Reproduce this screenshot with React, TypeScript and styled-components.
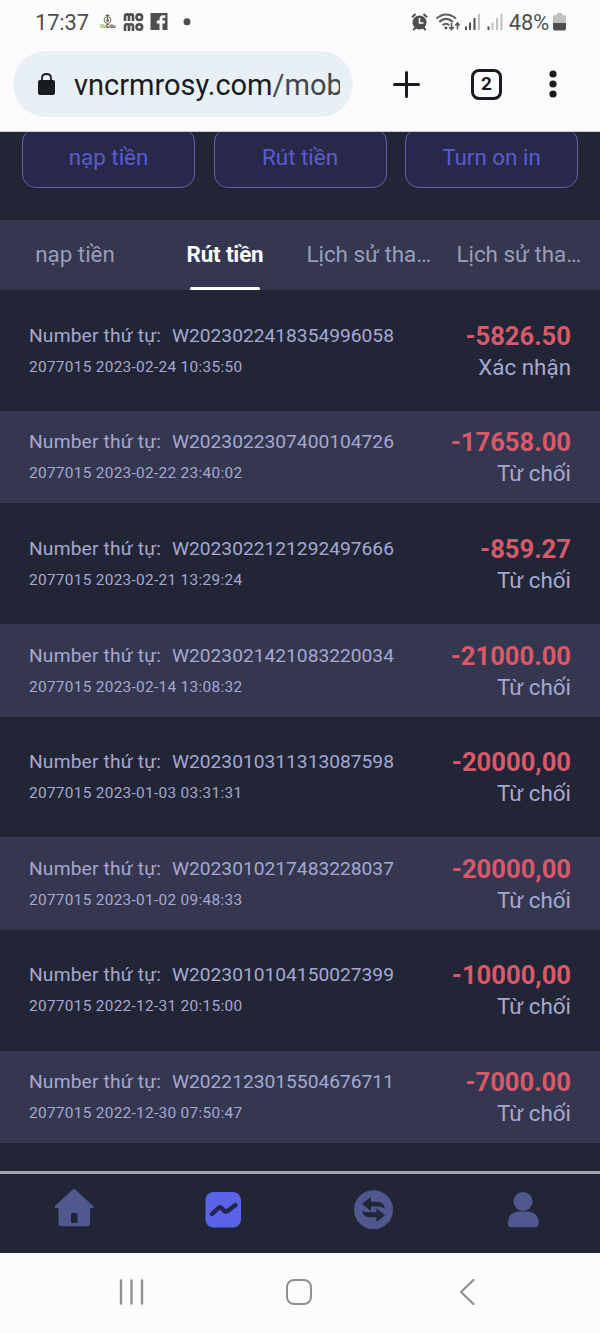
import React from "react";
import styled, { createGlobalStyle } from "styled-components";

const GlobalStyle = createGlobalStyle`
  * { box-sizing: border-box; }
  body { margin: 0; background: #fcfcfe; font-family: Roboto, "Noto Sans", sans-serif; }
  svg { display: block; flex: none; }
`;

const Screen = styled.div`
  width: 600px;
  height: 1333px;
  overflow: hidden;
  display: flex;
  flex-direction: column;
  background: #212536;
`;

const BrowserChrome = styled.header`
  flex: none;
  height: 132px;
  background: #fcfcfe;
  border-bottom: 1px solid #c9cad2;
`;

const StatusBar = styled.div`
  height: 51px;
  padding: 2px 34px 10px 35px;
  display: flex;
  align-items: center;
  justify-content: space-between;
  color: #4e4e50;
`;

const StatusGroup = styled.div<{ $gap: number }>`
  display: flex;
  align-items: center;
  gap: ${(p) => p.$gap}px;
`;

const StatusText = styled.span`
  font-size: 21.8px;
  line-height: 26px;
  padding-top: 2px;
  letter-spacing: -0.1px;
`;

const AddressRow = styled.div`
  display: flex;
  align-items: center;
  padding-left: 13px;
`;

const AddressPill = styled.div`
  width: 340px;
  height: 66px;
  border-radius: 33px;
  background: #e8eff5;
  display: flex;
  align-items: center;
  padding: 0 13px 0 24px;
`;

const Url = styled.div`
  margin-left: 19px;
  flex: 1;
  overflow: hidden;
  white-space: nowrap;
  font-size: 29px;
  line-height: 40px;
  padding-top: 2px;
  color: #191c1e;

  span { color: #43484d; }
`;

const ChromeActions = styled.div`
  flex: 1;
  display: flex;
  align-items: center;
  padding-left: 40px;
`;

const TabCount = styled.div`
  width: 31px;
  height: 31px;
  margin-left: 51px;
  margin-right: 47px;
  border: 3px solid #191c1e;
  border-radius: 8px;
  color: #191c1e;
  font-size: 19px;
  font-weight: 700;
  display: grid;
  place-items: center;
  line-height: 24px;
`;

const ActionRow = styled.div`
  flex: none;
  height: 88px;
  display: flex;
  justify-content: space-between;
  padding: 0 22px;
  overflow: hidden;
`;

const ActionButton = styled.button`
  width: 173px;
  height: 60px;
  margin-top: -4px;
  padding: 0 0 3px;
  border: 1.5px solid #6163a8;
  border-radius: 14px;
  background: #28294a;
  color: #5b5bd0;
  font: 400 22.4px/26px Roboto, "Noto Sans", sans-serif;
`;

const Tabs = styled.nav`
  flex: none;
  height: 70px;
  display: grid;
  grid-template-columns: repeat(4, 150px);
  background: #34374f;
`;

const Tab = styled.div<{ $active?: boolean; $clipped?: boolean }>`
  display: flex;
  flex-direction: column;
  align-items: ${(p) => (p.$clipped ? "flex-start" : "center")};
  justify-content: space-between;
  padding: 20px 0 0 ${(p) => (p.$clipped ? 6.4 : 0)}px;
  font-size: 22.4px;
  line-height: 28px;
  font-weight: ${(p) => (p.$active ? 700 : 400)};
  letter-spacing: ${(p) => (p.$active ? "-0.15px" : "0")};
  color: ${(p) => (p.$active ? "#ffffff" : "#9a9dba")};
  white-space: nowrap;

  &::after {
    content: "";
    width: 70px;
    height: 3px;
    border-radius: 2px;
    background: ${(p) => (p.$active ? "#ffffff" : "transparent")};
  }
`;

const RecordList = styled.main`
  flex: none;
  height: 881px;
  padding-top: 14.6px;
  display: flex;
  flex-direction: column;
  gap: 14.4px;
`;

const Record = styled.article<{ $striped: boolean }>`
  flex: none;
  height: 92.2px;
  padding: 16.3px 29px 0;
  display: flex;
  justify-content: space-between;
  background: ${(p) => (p.$striped ? "#34374f" : "transparent")};
  color: #a6a8d2;
`;

const OrderNumber = styled.div`
  display: flex;
  font-size: 19.2px;
  line-height: 30px;
`;

const OrderLabel = styled.span`
  width: 143px;
  letter-spacing: 0.18px;
`;

const OrderTime = styled.div`
  font-size: 15.4px;
  letter-spacing: 0.3px;
  line-height: 33px;
`;

const Result = styled.div`
  text-align: right;
`;

const Amount = styled.div`
  font-size: 25.6px;
  line-height: 30px;
  font-weight: 700;
  color: #d9596b;
`;

const State = styled.div`
  font-size: 22.4px;
  line-height: 32px;
`;

const AppNav = styled.nav`
  flex: none;
  height: 82px;
  border-top: 3px solid #a4a6b4;
  display: grid;
  grid-template-columns: 148px 150px 150px 150px;
  justify-items: center;
  padding-top: 15px;
`;

const SystemNav = styled.footer`
  flex: none;
  height: 80px;
  background: #fcfcfe;
  display: flex;
  align-items: center;
  padding: 0 0 2px 118px;

  svg + svg { margin-left: 140px; }
  svg + svg + svg { margin-left: 145px; }
`;

const records = [
  ["W2023022418354996058", "2077015 2023-02-24 10:35:50", "-5826.50", "Xác nhận"],
  ["W2023022307400104726", "2077015 2023-02-22 23:40:02", "-17658.00", "Từ chối"],
  ["W2023022121292497666", "2077015 2023-02-21 13:29:24", "-859.27", "Từ chối"],
  ["W2023021421083220034", "2077015 2023-02-14 13:08:32", "-21000.00", "Từ chối"],
  ["W2023010311313087598", "2077015 2023-01-03 03:31:31", "-20000,00", "Từ chối"],
  ["W2023010217483228037", "2077015 2023-01-02 09:48:33", "-20000,00", "Từ chối"],
  ["W2023010104150027399", "2077015 2022-12-31 20:15:00", "-10000,00", "Từ chối"],
  ["W2022123015504676711", "2077015 2022-12-30 07:50:47", "-7000.00", "Từ chối"],
];

const NotificationIcons = () => (
  <svg width="94" height="20" viewBox="0 0 94 20">
    <g fill="none" stroke="#6c7048" strokeWidth="1">
      <circle cx="8.5" cy="8" r="3.4" />
      <path d="M8.5 2v7M6.5 3.5h4" />
    </g>
    <circle cx="8.5" cy="8.5" r="1.3" fill="#555a35" />
    <text x="0.5" y="16.2" fontSize="5.5" fontWeight="700" fontFamily="Liberation Sans, sans-serif" textLength="16">
      <tspan fill="#8cb95c">Vie</tspan>
      <tspan fill="#4f3c38">Edu</tspan>
    </text>
    <g fill="none" stroke="#4e4e50" strokeWidth="2.6">
      <path d="M26 9V4.2Q26 2.400 28 2.400Q30 2.400 30 4.200V9M30 4.200Q30 2.400 32 2.400Q34 2.400 34 4.200V9" />
      <path d="M26 19V14Q26 12.200 28 12.200Q30 12.200 30 14V19M30 14Q30 12.200 32 12.200Q34 12.200 34 14V19" />
      <circle cx="40.300" cy="5.200" r="2.800" />
      <circle cx="40.300" cy="15" r="2.800" />
    </g>
    <rect x="51.500" y="1" width="17" height="17" fill="#4e4e50" />
    <path d="M60.500 18V11.500H57.800V8.600H60.500V7Q60.500 3.200 64.300 3.200H66.300V6.100H64.800Q63.500 6.100 63.500 7.300V8.600H66.200L65.800 11.500H63.500V18Z" fill="#fcfcfe" />
    <circle cx="88" cy="9.700" r="3.500" fill="#4e4e50" />
  </svg>
);

const SignalIcons = () => (
  <svg width="94" height="20" viewBox="0 0 94 20">
    <circle cx="8.500" cy="10.500" r="7" fill="#4e4e50" />
    <path d="M4.500 15.500l-2.200 2.700M12.500 15.500l2.200 2.700M1 5.200L4.500 2M16 5.200L12.500 2" stroke="#4e4e50" strokeWidth="2" />
    <path d="M8.500 6v5h4" fill="none" stroke="#fcfcfe" strokeWidth="1.600" />
    <g fill="none" stroke="#5c5c5e" strokeWidth="2">
      <path d="M25.500 6.500Q35 -1.500 45 6.500M28.200 10Q35 3.700 42 10M31.500 13.200Q35 10.200 38.200 13.200" />
      <path d="M40.500 11v6M38.300 15l2.200 2.500 2.200-2.500M46.500 17.500v-6M44.300 13.500l2.200-2.500 2.200 2.500" strokeWidth="1.600" />
    </g>
    <circle cx="35" cy="16" r="1.400" fill="#4e4e50" />
    <g fill="#4e4e50">
      <rect x="54" y="14.500" width="2" height="3.500" />
      <rect x="58" y="10.500" width="2" height="7.500" />
      <rect x="62.500" y="6" width="2" height="12" />
      <rect x="67" y="2" width="2" height="16" fill="#c0c0c3" />
      <rect x="76.500" y="14.500" width="2" height="3.500" />
      <g fill="#c0c0c3">
        <rect x="80.500" y="10.500" width="2" height="7.500" />
        <rect x="85" y="6" width="2" height="12" />
        <rect x="89.500" y="2" width="2" height="16" />
      </g>
    </g>
  </svg>
);

const BatteryIcon = () => (
  <svg width="13" height="18" viewBox="0 0 13 18">
    <path d="M4 0h5v2h2q2 0 2 2v6H0V4q0-2 2-2h2z" fill="#c0c0c3" />
    <path d="M0 10h13v5.500q0 2-2 2H2q-2 0-2-2z" fill="#4e4e50" />
  </svg>
);

const LockIcon = () => (
  <svg width="18" height="24" viewBox="0 0 18 24">
    <rect x="1" y="8" width="17" height="15" rx="2" fill="#191c1e" />
    <path d="M5 9V6Q5 2 9.500 2T14 6V9" fill="none" stroke="#191c1e" strokeWidth="1.800" />
  </svg>
);

const HomeIcon = () => (
  <svg width="40" height="40" viewBox="0 0 40 40">
    <path
      fillRule="evenodd"
      d="M18.600 0.700Q20 -0.500 21.400 0.700L39.300 17Q40 19 38.800 19.200H36V34Q36 37.200 32.800 37.200H7.700Q4.500 37.200 4.500 34V19.200H1.500Q.300 18.800 .800 17ZM18.500 24Q17 24 17 25.500V34H23.500V25.500Q23.500 24 22 24Z"
      fill="#50588f"
    />
  </svg>
);

const ChartIcon = () => (
  <svg width="40" height="40" viewBox="0 0 40 40">
    <rect x="2.500" y="3" width="35.500" height="35.500" rx="8" fill="#5a62e6" />
    <path d="M9 25L15.500 19Q17 17.500 18.500 19L21.500 22Q23 23.200 24.500 22L32.500 16" fill="none" stroke="#212550" strokeWidth="4.400" strokeLinecap="round" strokeLinejoin="round" />
  </svg>
);

const ExchangeIcon = () => (
  <svg width="40" height="40" viewBox="0 0 40 40">
    <circle cx="20.500" cy="20.800" r="19.500" fill="#50588f" />
    <path d="M9 14.700L18 8V12.700H24Q31 12.700 31.700 19.500Q29 17.500 24 17.500H18V22Z" fill="#212536" />
    <path d="M32 26.200L23.500 33V28.200H17Q10 28.200 9.300 21.800Q12 23.300 17 23.300H23.500V19.200Z" fill="#212536" />
  </svg>
);

const UserIcon = () => (
  <svg width="40" height="40" viewBox="0 0 40 40">
    <circle cx="20" cy="12.500" r="9.500" fill="#50588f" />
    <path d="M15 22.500H25.500Q35.700 23.500 35.700 34.500Q35.700 38.200 32 38.200H8.500Q4.800 38.200 4.800 34.500Q4.800 23.500 15 22.500Z" fill="#50588f" />
  </svg>
);

export default function App() {
  return (
    <>
      <GlobalStyle />
      <Screen>
        <BrowserChrome>
          <StatusBar>
            <StatusGroup $gap={10}>
              <StatusText>17:37</StatusText>
              <NotificationIcons />
            </StatusGroup>
            <StatusGroup $gap={4}>
              <SignalIcons />
              <StatusText>48%</StatusText>
              <BatteryIcon />
            </StatusGroup>
          </StatusBar>
          <AddressRow>
            <AddressPill>
              <LockIcon />
              <Url>vncrmrosy.com<span>/mob</span></Url>
            </AddressPill>
            <ChromeActions>
              <svg width="27" height="27" viewBox="0 0 27 27">
                <path d="M13.500 1.500V25.500M1.500 13.500H25.500" stroke="#191c1e" strokeWidth="3" strokeLinecap="round" />
              </svg>
              <TabCount>2</TabCount>
              <svg width="8" height="28" viewBox="0 0 8 28" fill="#191c1e">
                <circle cx="4" cy="4" r="3.600" />
                <circle cx="4" cy="14" r="3.600" />
                <circle cx="4" cy="24" r="3.600" />
              </svg>
            </ChromeActions>
          </AddressRow>
        </BrowserChrome>

        <ActionRow>
          <ActionButton>nạp tiền</ActionButton>
          <ActionButton>Rút tiền</ActionButton>
          <ActionButton>Turn on in</ActionButton>
        </ActionRow>

        <Tabs>
          <Tab>nạp tiền</Tab>
          <Tab $active>Rút tiền</Tab>
          <Tab $clipped>Lịch sử tha…</Tab>
          <Tab $clipped>Lịch sử tha…</Tab>
        </Tabs>

        <RecordList>
          {records.map(([order, time, amount, state], i) => (
            <Record key={order} $striped={i % 2 === 1}>
              <div>
                <OrderNumber>
                  <OrderLabel>Number thứ tự:</OrderLabel>
                  {order}
                </OrderNumber>
                <OrderTime>{time}</OrderTime>
              </div>
              <Result>
                <Amount>{amount}</Amount>
                <State>{state}</State>
              </Result>
            </Record>
          ))}
        </RecordList>

        <AppNav>
          <HomeIcon />
          <ChartIcon />
          <ExchangeIcon />
          <UserIcon />
        </AppNav>

        <SystemNav>
          <svg width="27" height="28" viewBox="0 0 27 28">
            <path d="M3 2.500V25.500M13.500 2.500V25.500M24 2.500V25.500" stroke="#8f9092" strokeWidth="2.400" strokeLinecap="round" />
          </svg>
          <svg width="28" height="28" viewBox="0 0 28 28">
            <rect x="2" y="2" width="24" height="24" rx="7" fill="none" stroke="#8f9092" strokeWidth="2" />
          </svg>
          <svg width="18" height="28" viewBox="0 0 18 28">
            <path d="M15.500 2L3 14L15.500 26" fill="none" stroke="#8f9092" strokeWidth="2.200" strokeLinecap="round" strokeLinejoin="round" />
          </svg>
        </SystemNav>
      </Screen>
    </>
  );
}
